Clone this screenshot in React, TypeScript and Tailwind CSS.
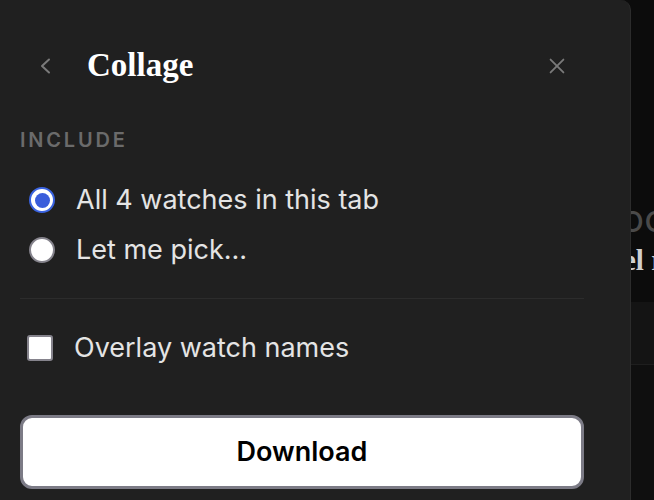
import React from "react";

export default function App() {
  return (
    <div className="relative w-[654px] h-[500px] overflow-hidden bg-[#0f0f0f]" style={{ fontFamily: "Inter, 'Noto Sans', sans-serif" }}>
      {/* background page behind the drawer */}
      <div className="flex flex-col w-full h-full">
        <div className="h-[302px] bg-[#0c0c0c] flex flex-col pt-[198px]">
          <div className="pl-[593px] text-[38px] leading-[40px] text-[#4a4a4a] whitespace-nowrap">Good</div>
          <div className="pl-[565px] text-[29px] leading-[44px] font-bold text-[#d0d0d0] whitespace-nowrap" style={{ fontFamily: "'Liberation Serif', serif" }}>Model r</div>
        </div>
        <div className="h-[63px] bg-[#141414] border-b border-[#1e1e1e]" />
        <div className="flex-1 bg-[#0f0f0f]" />
      </div>

      {/* drawer */}
      <div className="absolute left-0 top-0 w-[631px] h-[500px] bg-[#202020] border-r border-[#2c2c2c] rounded-tr-[10px] pl-5">
        <div className="w-[564px] flex flex-col">
          <div className="flex items-center h-[128px] pt-[3px]">
            <svg width="12" height="16" viewBox="0 0 12 16" className="ml-[19px]" fill="none" stroke="#7a7a7a" strokeWidth="2" strokeLinecap="round" strokeLinejoin="round">
              <path d="M10 1.5L3 8l7 6.5" />
            </svg>
            <div className="ml-[36px] text-[33px] font-bold text-white" style={{ fontFamily: "'Liberation Serif', serif" }}>Collage</div>
            <div className="flex-1" />
            <svg width="22" height="22" viewBox="0 0 24 24" className="mr-[16px]" fill="none" stroke="#7a7a7a" strokeWidth="2" strokeLinecap="round">
              <path d="M5 5l14 14M19 5L5 19" />
            </svg>
          </div>
          <div className="text-[20px] leading-[24px] font-semibold tracking-[2.8px] text-[#6b6b6b]">INCLUDE</div>
          <div className="flex flex-col mt-[35px] gap-[24px]">
            <label className="flex items-center h-[26px]">
              <span className="ml-[9px] w-[26px] h-[26px] rounded-full border-[2px] border-[#3a63e0] bg-white flex items-center justify-center">
                <span className="w-[15px] h-[15px] rounded-full bg-[#3a5ddb]" />
              </span>
              <span className="ml-[21px] text-[27px] text-[#e4e4e4]">All 4 watches in this tab</span>
            </label>
            <label className="flex items-center h-[26px]">
              <span className="ml-[9px] w-[26px] h-[26px] rounded-full border-[2px] border-[#85838c] bg-white" />
              <span className="ml-[21px] text-[27px] text-[#e4e4e4]">Let me pick...</span>
            </label>
          </div>
          <div className="mt-[35px] h-px bg-[#2c2c2c]" />
          <label className="flex items-center mt-[36px] h-[26px]">
            <span className="ml-[7px] w-[26px] h-[26px] rounded-[3px] border-[2px] border-[#85838c] bg-white" />
            <span className="ml-[21px] text-[27px] text-[#e4e4e4]">Overlay watch names</span>
          </label>
          <button className="mt-[54px] h-[74px] w-[564px] rounded-[12px] bg-white border-[3px] border-[#7c7b86] text-[27px] font-semibold text-black flex items-center justify-center">
            Download
          </button>
        </div>
      </div>
    </div>
  );
}
